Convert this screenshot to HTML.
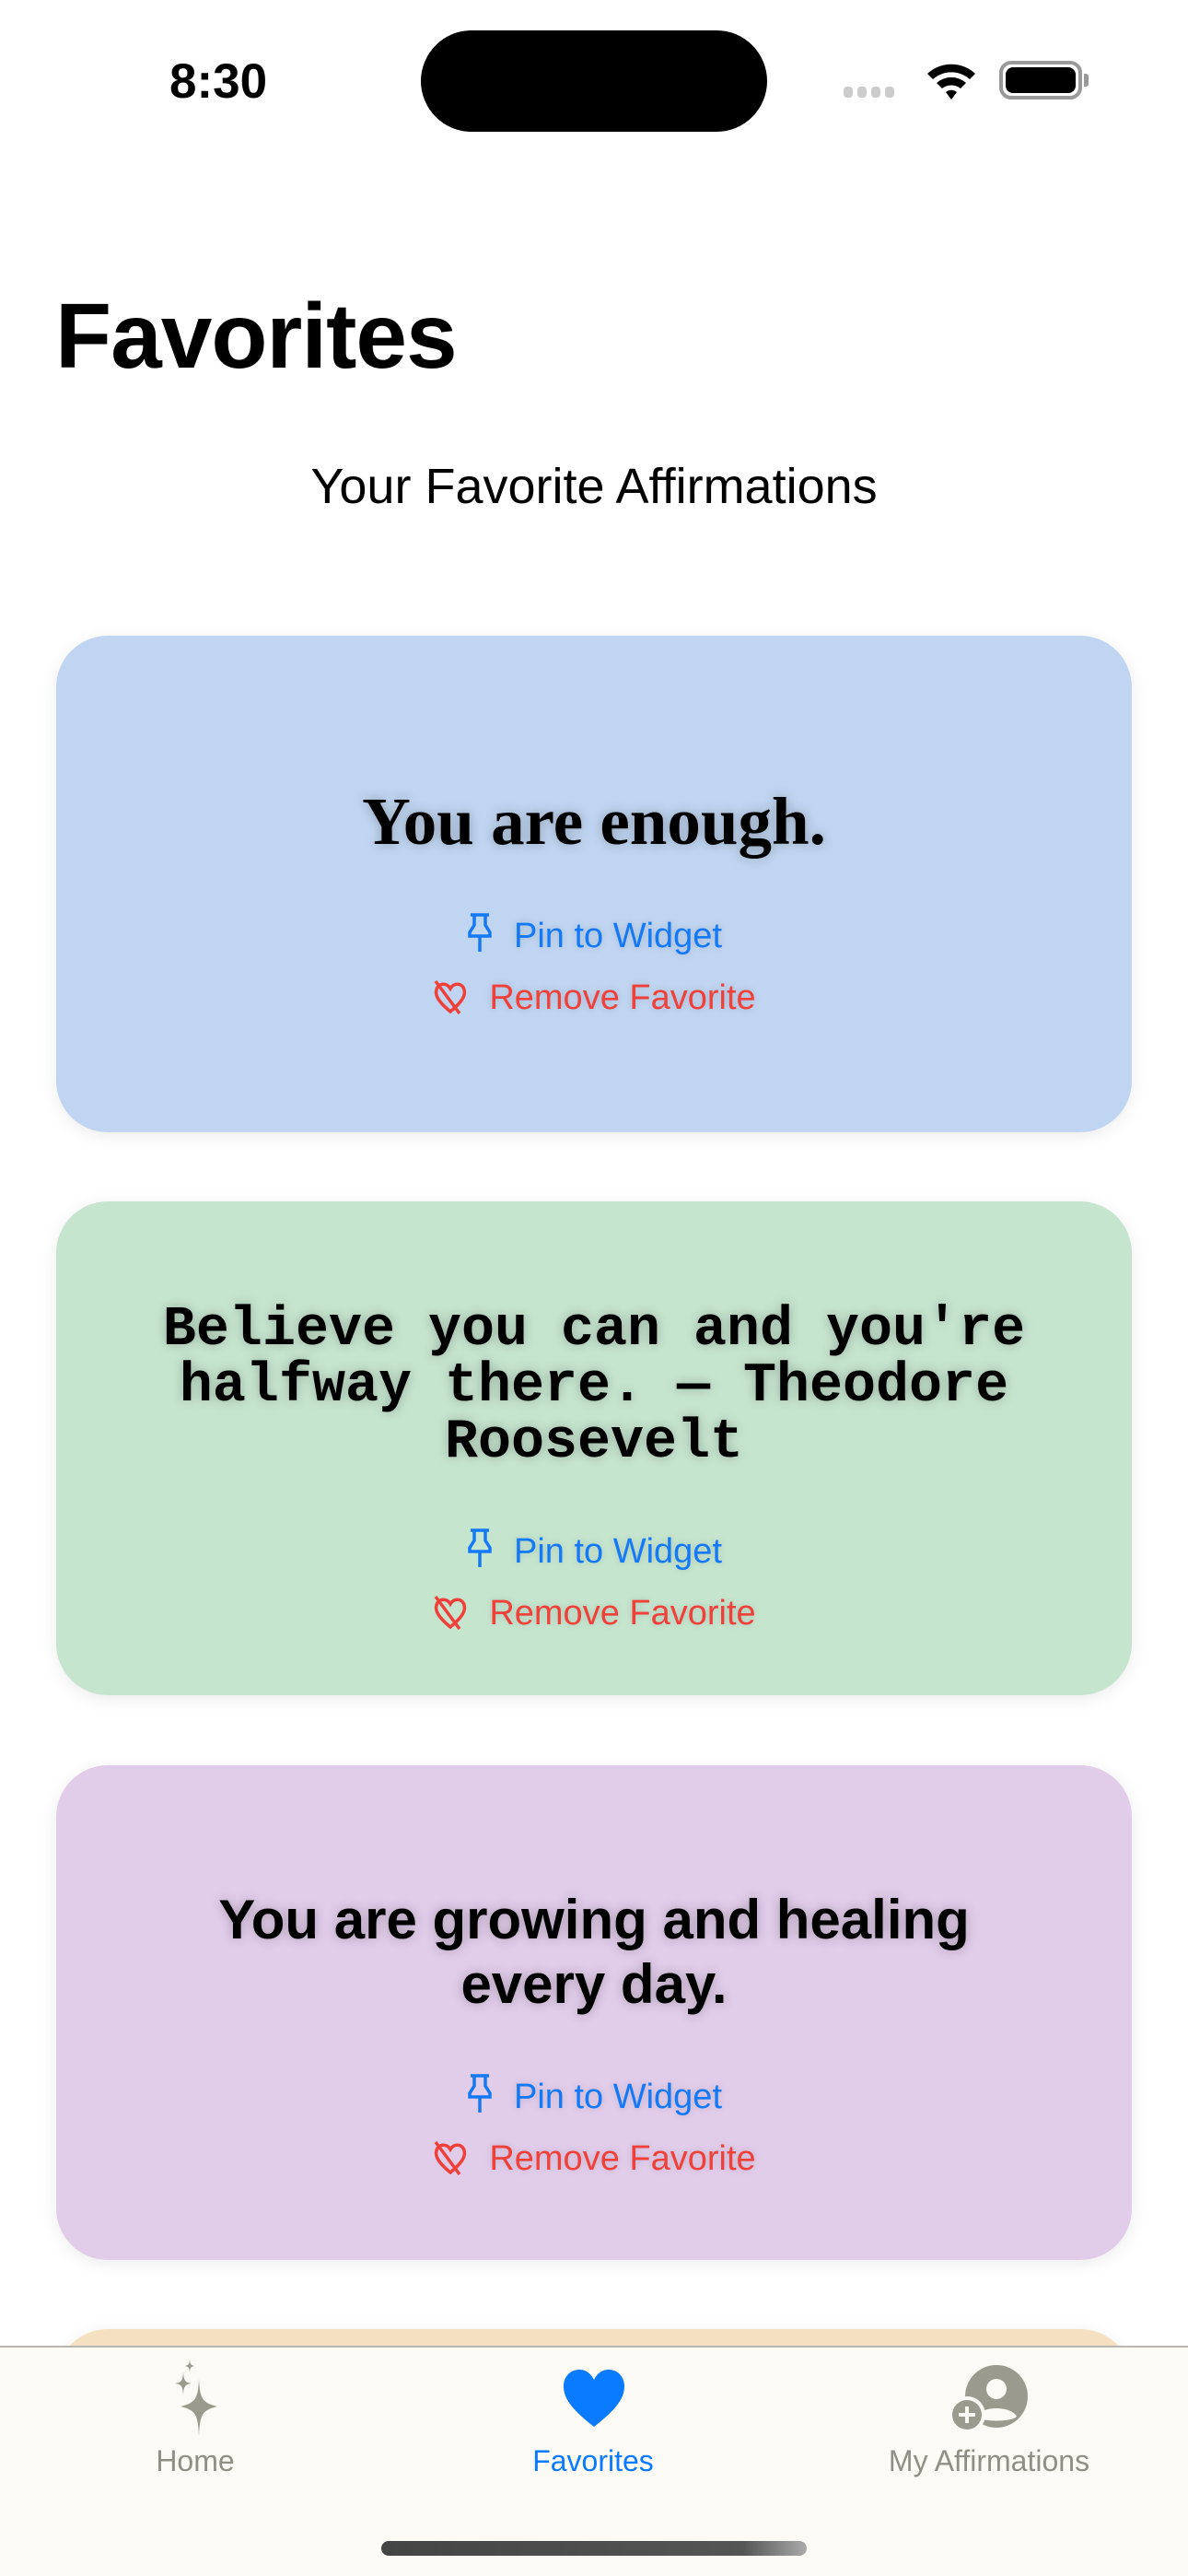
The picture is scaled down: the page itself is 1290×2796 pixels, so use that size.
<!DOCTYPE html>
<html><head><meta charset="utf-8"><style>
*{margin:0;padding:0;box-sizing:border-box}
html{overflow:hidden}
body{width:1290px;height:2796px;background:#fff;position:relative;overflow:hidden;font-family:"Liberation Sans",sans-serif}
.abs{position:absolute}
.card{position:absolute;left:61px;width:1168px;border-radius:56px;box-shadow:0 4px 18px rgba(0,0,0,0.08)}
.q{position:absolute;left:0;width:100%;text-align:center;color:#000;text-shadow:0 0 12px rgba(0,0,0,0.25)}
.act{position:absolute;left:0;width:100%;text-align:center;font-size:38px;text-shadow:0 0 8px rgba(0,0,0,0.15)}
.act svg{vertical-align:-6px;margin-right:22px}
.blue{color:#1479f6}.red{color:#f0403a}
.tab{position:absolute;top:2653px;font-size:32px;color:#8f8f85;text-align:center;width:400px}
</style></head><body>
<div class="abs" style="left:184px;top:58px;font-size:53px;font-weight:bold;">8:30</div>
<div class="abs" style="left:457px;top:33px;width:376px;height:110px;border-radius:55px;background:#000"></div>
<div class="abs" style="left:916px;top:94px;width:60px;height:12px;">
<span class="abs" style="left:0;width:10px;height:12px;border-radius:4px;background:#ccc"></span>
<span class="abs" style="left:15px;width:10px;height:12px;border-radius:4px;background:#ccc"></span>
<span class="abs" style="left:30px;width:10px;height:12px;border-radius:4px;background:#ccc"></span>
<span class="abs" style="left:45px;width:10px;height:12px;border-radius:4px;background:#ccc"></span></div>
<svg class="abs" style="left:1003px;top:64px" width="60" height="44" viewBox="0 0 60 44"><path d="M4 16 A38 38 0 0 1 56 16 L50 22 A30 30 0 0 0 10 22Z M14 26 A24 24 0 0 1 46 26 L40 32 A16 16 0 0 0 20 32Z M24 36 A9 9 0 0 1 36 36 L30 44Z" fill="#000"/></svg>
<div class="abs" style="left:1085px;top:66px;width:90px;height:42px;border:4px solid #999;border-radius:13px"></div>
<div class="abs" style="left:1092px;top:73px;width:76px;height:28px;background:#000;border-radius:8px"></div>
<div class="abs" style="left:1177px;top:80px;width:5px;height:14px;background:#999;border-radius:0 3px 3px 0"></div>

<div class="abs" style="left:60px;top:308px;font-size:100px;font-weight:bold;letter-spacing:-1px">Favorites</div>
<div class="abs" style="left:0;width:1290px;top:497px;text-align:center;font-size:54px">Your Favorite Affirmations</div>

<div class="card" style="top:690px;height:539px;background:#c0d5f1">
<div class="q" style="top:160px;font-family:'Liberation Serif',serif;font-weight:bold;font-size:73px">You are enough.</div>
<div class="act blue" style="top:300px"><svg width="30" height="44" viewBox="0 0 30 44" fill="none" stroke="#1479f6" stroke-width="3.5"><path d="M5 3H25M9 3V14L4 22V26H26V22L21 14V3M15 26V43"/></svg>Pin to Widget</div>
<div class="act red" style="top:372px"><svg width="40" height="38" viewBox="0 0 40 38" fill="none" stroke="#f0403a" stroke-width="3.5"><path d="M20 35 C8 25 3 18 5 11 C7 4 16 3 20 10 C24 3 33 4 35 11 C37 18 32 25 20 35Z M4 2 L30 37"/></svg>Remove Favorite</div>
</div>

<div class="card" style="top:1304px;height:536px;background:#c6e5cf">
<div class="q" style="top:110px;font-family:'Liberation Mono',monospace;font-weight:bold;font-size:60px;line-height:61px;padding:0 80px">Believe you can and you're halfway there. — Theodore Roosevelt</div>
<div class="act blue" style="top:354px"><svg width="30" height="44" viewBox="0 0 30 44" fill="none" stroke="#1479f6" stroke-width="3.5"><path d="M5 3H25M9 3V14L4 22V26H26V22L21 14V3M15 26V43"/></svg>Pin to Widget</div>
<div class="act red" style="top:426px"><svg width="40" height="38" viewBox="0 0 40 38" fill="none" stroke="#f0403a" stroke-width="3.5"><path d="M20 35 C8 25 3 18 5 11 C7 4 16 3 20 10 C24 3 33 4 35 11 C37 18 32 25 20 35Z M4 2 L30 37"/></svg>Remove Favorite</div>
</div>

<div class="card" style="top:1916px;height:537px;background:#e1cdea">
<div class="q" style="top:133px;font-weight:bold;font-size:60px;line-height:70px;padding:0 140px">You are growing and healing every day.</div>
<div class="act blue" style="top:334px"><svg width="30" height="44" viewBox="0 0 30 44" fill="none" stroke="#1479f6" stroke-width="3.5"><path d="M5 3H25M9 3V14L4 22V26H26V22L21 14V3M15 26V43"/></svg>Pin to Widget</div>
<div class="act red" style="top:406px"><svg width="40" height="38" viewBox="0 0 40 38" fill="none" stroke="#f0403a" stroke-width="3.5"><path d="M20 35 C8 25 3 18 5 11 C7 4 16 3 20 10 C24 3 33 4 35 11 C37 18 32 25 20 35Z M4 2 L30 37"/></svg>Remove Favorite</div>
</div>

<div class="card" style="top:2528px;height:200px;background:#f6e0c2"></div>

<div class="abs" style="left:0;top:2546px;width:1290px;height:250px;background:#fbfaf4;border-top:2px solid #b8b6ae"></div>
<svg class="abs" style="left:178px;top:2560px" width="70" height="84" viewBox="0 0 70 84" fill="#9b9a8f"><path d="M38 22 C39 44 42 48 58 52 C42 56 39 60 38 84 C37 60 34 56 18 52 C34 48 37 44 38 22Z M21 14 C21.5 24 23 26 30 27 C23 28 21.5 30 21 40 C20.5 30 19 28 12 27 C19 26 20.5 24 21 14Z M28 0 C28.3 6 29 7 33 8 C29 9 28.3 10 28 16 C27.7 10 27 9 23 8 C27 7 27.7 6 28 0Z"/></svg>
<svg class="abs" style="left:610px;top:2570px" width="70" height="66" viewBox="0 0 70 66"><path d="M35 64 C12 46 2 34 2 20 C2 9 10 2 19 2 C27 2 32 7 35 13 C38 7 43 2 51 2 C60 2 68 9 68 20 C68 34 58 46 35 64Z" fill="#0a7aff"/></svg>
<svg class="abs" style="left:1030px;top:2565px" width="86" height="76" viewBox="0 0 86 76"><circle cx="52" cy="36" r="34" fill="#9b9a8f"/><circle cx="52" cy="28" r="11" fill="#fbfaf4"/><path d="M30 58 C36 46 68 46 74 58 C68 64 36 64 30 58Z" fill="#fbfaf4"/><circle cx="20" cy="56" r="20" fill="#fbfaf4"/><circle cx="20" cy="56" r="16" fill="#9b9a8f"/><path d="M20 47V65M11 56H29" stroke="#fbfaf4" stroke-width="4"/></svg>
<div class="tab" style="left:12px">Home</div>
<div class="tab" style="left:444px;color:#0a7aff">Favorites</div>
<div class="tab" style="left:874px">My Affirmations</div>
<div class="abs" style="left:414px;top:2758px;width:462px;height:16px;border-radius:8px;background:linear-gradient(90deg,#444,#555 85%,#aaa)"></div>
</body></html>
